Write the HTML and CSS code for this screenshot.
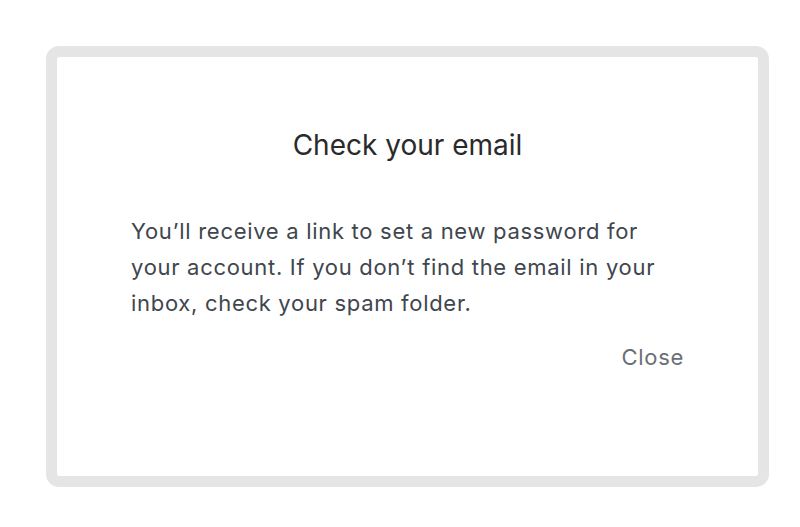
FILE: index.html
```html
<!DOCTYPE html>
<html>
<head>
<meta charset="utf-8">
<link rel="stylesheet" href="styles.css">
</head>
<body>
<div class="page">
  <div class="modal">
    <h1 class="title">Check your email</h1>
    <p class="message">You’ll receive a link to set a new password for your account. If you don’t find the email in your inbox, check your spam folder.</p>
    <div class="actions"><button class="close">Close</button></div>
  </div>
</div>
</body>
</html>
```
FILE: styles.css
```css
html, body { margin: 0; padding: 0; background: #fff; }
body { font-family: Inter, "Noto Sans", sans-serif; }
.page { padding: 46px 31px 40px 46px; }
.modal {
  box-sizing: border-box;
  width: 723px;
  height: 441px;
  border: 11px solid #e5e5e5;
  border-radius: 13px;
  padding: 70px 74px 0 74px;
  background: #fff;
}
.title {
  margin: 0;
  text-align: center;
  font-size: 28px;
  line-height: 36px;
  font-weight: 400;
  color: #2a2a2a;
}
.message {
  margin: 50px 0 0 0;
  font-size: 22px;
  line-height: 36px;
  letter-spacing: 0.7px;
  color: #40464d;
}
.actions { display: flex; justify-content: flex-end; margin-top: 18px; }
.close {
  border: 0; background: none; padding: 0;
  font-family: inherit; font-size: 22px; line-height: 36px;
  letter-spacing: 0.7px;
  color: #6a6f76;
}
```
